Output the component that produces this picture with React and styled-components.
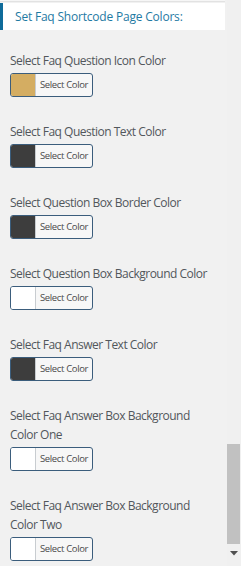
import styled, { createGlobalStyle } from 'styled-components';

const GlobalStyle = createGlobalStyle`
  html, body {
    margin: 0;
    padding: 0;
    background: #f1f1f1;
  }
  body {
    font-family: "Open Sans", "Noto Sans", sans-serif;
  }
`;

const Frame = styled.div`
  display: flex;
  width: 241px;
  height: 566px;
  overflow: hidden;
  background: #f1f1f1;
`;

const Content = styled.div`
  flex: 1;
  min-width: 0;
  overflow: hidden;
`;

const TopEdge = styled.div`
  height: 2px;
  width: 225px;
  background: #f6f6f6;
  border-bottom: 1px solid #e2e2e2;
  box-sizing: border-box;
`;

const Heading = styled.div`
  width: 225px;
  height: 27px;
  margin-top: 1px;
  box-sizing: border-box;
  background: #fff;
  border-left: 3px solid #0f6b9a;
  padding-left: 12px;
  display: flex;
  align-items: center;
  font-size: 12px;
  color: #1f7aa3;
  letter-spacing: -0.2px;
`;

const Fields = styled.div`
  display: flex;
  flex-direction: column;
  gap: 25.5px;
  padding: 21px 0 0 10px;
  width: 205px;
`;

const Field = styled.div`
  display: flex;
  flex-direction: column;
  align-items: flex-start;
  gap: 2.5px;
`;

const Label = styled.div`
  font-size: 12px;
  line-height: 19px;
  color: #52575c;
  letter-spacing: -0.5px;
`;

const ColorButton = styled.button`
  display: flex;
  align-items: stretch;
  width: 83px;
  height: 24px;
  padding: 0;
  border: 1px solid #3b5d7c;
  border-radius: 3px;
  background: #f7f7f7;
  overflow: hidden;
  cursor: pointer;
  font-family: inherit;
`;

const Swatch = styled.span`
  width: 24px;
  background: ${p => p.color};
  border-right: 1px solid #c8ccd0;
`;

const ButtonText = styled.span`
  flex: 1;
  display: flex;
  align-items: center;
  justify-content: center;
  font-size: 9.5px;
  color: #4a4a4a;
  letter-spacing: -0.35px;
`;

const ScrollBar = styled.div`
  width: 14px;
  margin-left: 2px;
  display: flex;
  flex-direction: column;
  background: #f0f0f0;
`;

const Track = styled.div`
  flex: 1;
  display: flex;
  flex-direction: column;
  justify-content: flex-end;
  padding-bottom: 22px;
`;

const Thumb = styled.div`
  height: 100px;
  width: 13px;
  background: #c1c1c1;
`;

const Arrow = styled.div`
  height: 14px;
  display: flex;
  align-items: center;
  justify-content: center;
  margin-top: -20px;
  margin-bottom: 6px;
`;

const fields = [
  { label: 'Select Faq Question Icon Color', color: '#d4ad62' },
  { label: 'Select Faq Question Text Color', color: '#3d3d3d' },
  { label: 'Select Question Box Border Color', color: '#3d3d3d' },
  { label: 'Select Question Box Background Color', color: '#ffffff' },
  { label: 'Select Faq Answer Text Color', color: '#3d3d3d' },
  { label: 'Select Faq Answer Box Background Color One', color: '#ffffff' },
  { label: 'Select Faq Answer Box Background Color Two', color: '#ffffff' },
];

export default function App() {
  return (
    <>
      <GlobalStyle />
      <Frame>
        <Content>
          <TopEdge />
          <Heading>Set Faq Shortcode Page Colors:</Heading>
          <Fields>
            {fields.map(f => (
              <Field key={f.label}>
                <Label>{f.label}</Label>
                <ColorButton type="button">
                  <Swatch color={f.color} />
                  <ButtonText>Select Color</ButtonText>
                </ColorButton>
              </Field>
            ))}
          </Fields>
        </Content>
        <ScrollBar>
          <Track>
            <Thumb />
          </Track>
          <Arrow>
            <svg width="8" height="5" viewBox="0 0 8 5">
              <path d="M0 0 H8 L4 4.5 Z" fill="#505050" />
            </svg>
          </Arrow>
        </ScrollBar>
      </Frame>
    </>
  );
}
